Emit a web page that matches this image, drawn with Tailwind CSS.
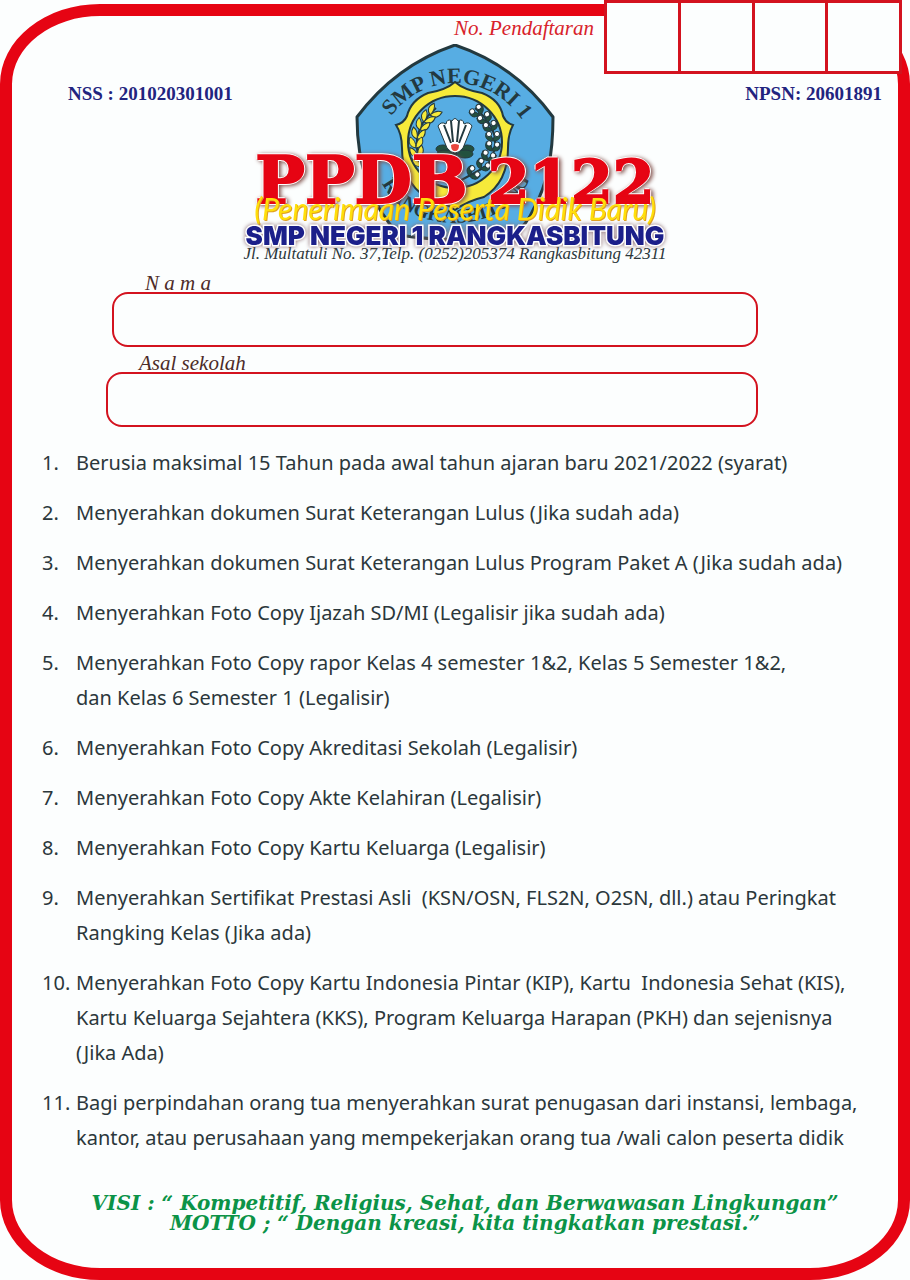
<!DOCTYPE html>
<html lang="id">
<head>
<meta charset="utf-8">
<title>Formulir PPDB SMP Negeri 1 Rangkasbitung</title>
<meta name="viewport" content="width=device-width, initial-scale=1">
<script src="https://cdn.jsdelivr.net/npm/@tailwindcss/browser@4"></script>
</head>
<body class="bg-[#fcfefe] font-['Noto_Sans','Open_Sans',sans-serif] text-[#2b373b]">
<main class="relative flex min-h-screen flex-col pt-1">
  <!-- Registration number boxes sit on top of the frame's corner -->
  <fieldset class="absolute top-0 right-2 z-10 flex h-[74px] w-[298px] divide-x-3 divide-[#d3131f] border-3 border-[#d3131f] bg-[#fcfefe]" aria-labelledby="no-label">
    <input class="w-0 flex-1 text-center text-3xl outline-none" type="text" maxlength="1" aria-label="Digit 1">
    <input class="w-0 flex-1 text-center text-3xl outline-none" type="text" maxlength="1" aria-label="Digit 2">
    <input class="w-0 flex-1 text-center text-3xl outline-none" type="text" maxlength="1" aria-label="Digit 3">
    <input class="w-0 flex-1 text-center text-3xl outline-none" type="text" maxlength="1" aria-label="Digit 4">
  </fieldset>

  <div class="flex flex-1 flex-col rounded-[100px/80px] border-12 border-[#e60413]">
    <p id="no-label" class="pr-[304px] text-right font-['Liberation_Serif',serif] text-[21px] leading-6 text-[#d8222a] italic">No. Pendaftaran</p>

    <header class="grid grid-cols-[1fr_424px_1fr] font-['Liberation_Serif',serif]">
      <p class="pt-[42px] pl-14 text-[19px] leading-6 font-bold text-[#22247f]">NSS : 201020301001</p>

      <div class="grid justify-items-center">
        <svg class="col-start-1 row-start-1 mt-1 h-[200px] w-[200px]" viewBox="355 44 200 200" role="img" aria-label="Lambang SMP Negeri 1 Rangkasbitung">
          <defs>
            <path id="arcTop" d="M387 122Q413 84 455 83Q500 84 526 126"/>
            <path id="arcBottom" d="M379 176Q396 221 455 223Q514 221 533 172"/>
            <g id="grain" fill="#f6ea3a" stroke="#23393f" stroke-width="1">
              <path d="M0 0C-6-1-8-5-6-11C-2-9 0-5 0 0Z"/>
              <path d="M0 0C6-1 8-5 6-11C2-9 0-5 0 0Z"/>
            </g>
            <g id="cotton" stroke="#23393f" stroke-width="1">
              <path d="M0 6C-7 6-8 2-7-2C-3-1-1 1 0 5C1 1 3-1 7-2C8 2 7 6 0 6Z" fill="#23513f"/>
              <circle cx="-4" cy="-1" r="2.6" fill="#fff"/>
              <circle cx="4" cy="-1" r="2.6" fill="#fff"/>
            </g>
          </defs>
          <path d="M455 45Q515 65 553 117Q553 175 534 208Q527 225 513 235Q455 244 399 235Q357 190 357 117Q396 65 455 45Z" fill="#57ade3" stroke="#23393f" stroke-width="3" stroke-linejoin="round"/>
          <path d="M455 82Q464 90 482 93Q500 100 503 116Q506 123 513 125Q508 134 508 148Q508 182 484 197Q467 201 455 210Q443 201 426 197Q402 182 402 148Q402 134 396 125Q404 123 407 116Q411 100 428 93Q446 90 455 82Z" fill="#f6ea3a" stroke="#23393f" stroke-width="2"/>
          <ellipse cx="455" cy="142" rx="47" ry="46" fill="#57ade3" stroke="#23393f" stroke-width="2"/>
          <!-- rice -->
          <g>
            <path d="M436 108Q404 135 425 173L450 183" fill="none" stroke="#23393f" stroke-width="2"/>
            <use href="#grain" transform="translate(430 115) rotate(48)"/>
            <use href="#grain" transform="translate(424 122) rotate(38)"/>
            <use href="#grain" transform="translate(420 130) rotate(25)"/>
            <use href="#grain" transform="translate(417 139) rotate(12)"/>
            <use href="#grain" transform="translate(416 148) rotate(0)"/>
            <use href="#grain" transform="translate(418 157) rotate(-12)"/>
            <use href="#grain" transform="translate(422 166) rotate(-24)"/>
          </g>
          <!-- cotton -->
          <g>
            <path d="M475 108Q508 135 487 166L456 183" fill="none" stroke="#23393f" stroke-width="2"/>
            <use href="#cotton" transform="translate(476 110) rotate(-35)"/>
            <use href="#cotton" transform="translate(484 117) rotate(-28)"/>
            <use href="#cotton" transform="translate(490 125) rotate(-15)"/>
            <use href="#cotton" transform="translate(493 135)"/>
            <use href="#cotton" transform="translate(493 145) rotate(8)"/>
            <use href="#cotton" transform="translate(489 155) rotate(20)"/>
            <use href="#cotton" transform="translate(484 164) rotate(35)"/>
            <use href="#cotton" transform="translate(474 172) rotate(50)"/>
          </g>
          <!-- flower -->
          <g stroke="#23393f" stroke-width="1">
            <path d="M455 152V182" stroke-width="4"/>
            <ellipse cx="443" cy="149" rx="7" ry="4" fill="#23513f"/>
            <ellipse cx="467" cy="149" rx="7" ry="4" fill="#23513f"/>
            <ellipse cx="445" cy="154" rx="8" ry="4" fill="#23513f"/>
            <ellipse cx="465" cy="154" rx="8" ry="4" fill="#23513f"/>
            <path d="M447 148L438 126Q441 121 446 124Q447 118 452 121Q455 116 458 121Q463 118 464 124Q469 121 472 126L463 148Q459 153 455 153Q451 153 447 148Z" fill="#fff"/>
            <path d="M444 125L451 143M451 121L453 142M459 121L457 142M466 125L459 143" fill="none" stroke-width="2"/>
            <path d="M451 145Q455 143 459 145Q459 151 455 151Q451 151 451 145Z" fill="#e8463c" stroke="none"/>
          </g>
          <g fill="#23393f" font-family="Liberation Serif, serif" font-weight="bold">
            <text font-size="22"><textPath href="#arcTop" startOffset="50%" text-anchor="middle">SMP NEGERI 1</textPath></text>
            <text font-size="20"><textPath href="#arcBottom" startOffset="50%" text-anchor="middle">RANGKASBITUNG</textPath></text>
          </g>
        </svg>

        <div class="z-10 col-start-1 row-start-1 flex flex-col items-center pt-[116px] whitespace-nowrap">
          <h1 class="flex items-baseline gap-5 font-['DejaVu_Serif',serif] text-[66px] leading-12 font-bold text-[#e60413] drop-shadow-[2px_1px_2px_#80504a] [-webkit-text-stroke:2px_#e60413] [text-shadow:1px_1px_0_#fff,-1px_1px_0_#fff,1px_-1px_0_#fff,-1px_-1px_0_#fff,2px_0_0_#fff,-2px_0_0_#fff,0_2px_0_#fff,0_-2px_0_#fff]">
            <span>PPDB</span><span class="text-[60px]">2122</span>
          </h1>
          <p class="-mt-2.5 font-['Lato',sans-serif] text-[30px] leading-6 text-[#ffdf0a] italic drop-shadow-[1px_1px_0_#e0a020]">(Penerimaan Peserta Didik Baru)</p>
          <p class="mt-1 font-['Inter',sans-serif] text-[26px] leading-6 font-black text-[#1b1f8a] drop-shadow-[0_0_2px_#8a6a70] [-webkit-text-stroke:3px_#fff] [paint-order:stroke]">SMP NEGERI 1 RANGKASBITUNG</p>
          <p class="-mt-0.5 text-[17px] leading-4 italic">Jl. Multatuli No. 37,Telp. (0252)205374 Rangkasbitung 42311</p>
        </div>
      </div>

      <p class="pt-[42px] pr-4 text-right text-[19px] leading-6 font-bold text-[#22247f]">NPSN: 20601891</p>
    </header>

    <form class="flex flex-col pt-3 pr-[140px] font-['Liberation_Serif',serif]">
      <label for="nama" class="pl-[133px] text-[21px] leading-[18px] text-[#4d2b28] italic">N a m a</label>
      <input id="nama" type="text" class="ml-[100px] h-[55px] rounded-2xl border-2 border-[#d3131f] px-5 text-xl outline-none">
      <label for="asal" class="mt-[7px] pl-[127px] text-[21px] leading-[18px] text-[#4d2b28] italic">Asal sekolah</label>
      <input id="asal" type="text" class="ml-[94px] h-[55px] rounded-2xl border-2 border-[#d3131f] px-5 text-xl outline-none">
    </form>

    <ol class="mt-[18px] flex flex-col gap-[15px] pl-[30px] text-[20px] leading-[35px]">
      <li class="flex"><span class="w-[34px] shrink-0">1.</span><p>Berusia maksimal 15 Tahun pada awal tahun ajaran baru 2021/2022 (syarat)</p></li>
      <li class="flex"><span class="w-[34px] shrink-0">2.</span><p>Menyerahkan dokumen Surat Keterangan Lulus (Jika sudah ada)</p></li>
      <li class="flex"><span class="w-[34px] shrink-0">3.</span><p>Menyerahkan dokumen Surat Keterangan Lulus Program Paket A (Jika sudah ada)</p></li>
      <li class="flex"><span class="w-[34px] shrink-0">4.</span><p>Menyerahkan Foto Copy Ijazah SD/MI (Legalisir jika sudah ada)</p></li>
      <li class="flex"><span class="w-[34px] shrink-0">5.</span><p>Menyerahkan Foto Copy rapor Kelas 4 semester 1&amp;2, Kelas 5 Semester 1&amp;2,<br>dan Kelas 6 Semester 1 (Legalisir)</p></li>
      <li class="flex"><span class="w-[34px] shrink-0">6.</span><p>Menyerahkan Foto Copy Akreditasi Sekolah (Legalisir)</p></li>
      <li class="flex"><span class="w-[34px] shrink-0">7.</span><p>Menyerahkan Foto Copy Akte Kelahiran (Legalisir)</p></li>
      <li class="flex"><span class="w-[34px] shrink-0">8.</span><p>Menyerahkan Foto Copy Kartu Keluarga (Legalisir)</p></li>
      <li class="flex"><span class="w-[34px] shrink-0">9.</span><p>Menyerahkan Sertifikat Prestasi Asli&nbsp; (KSN/OSN, FLS2N, O2SN, dll.) atau Peringkat<br>Rangking Kelas (Jika ada)</p></li>
      <li class="flex"><span class="w-[34px] shrink-0">10.</span><p>Menyerahkan Foto Copy Kartu Indonesia Pintar (KIP), Kartu&nbsp; Indonesia Sehat (KIS),<br>Kartu Keluarga Sejahtera (KKS), Program Keluarga Harapan (PKH) dan sejenisnya<br>(Jika Ada)</p></li>
      <li class="flex"><span class="w-[34px] shrink-0">11.</span><p>Bagi perpindahan orang tua menyerahkan surat penugasan dari instansi, lembaga,<br>kantor, atau perusahaan yang mempekerjakan orang tua /wali calon peserta didik</p></li>
    </ol>

    <footer class="mt-[38px] pl-5 text-center font-['DejaVu_Serif',serif] text-[20px] leading-5 font-bold text-[#0b9347] italic">
      <p>VISI : “ Kompetitif, Religius, Sehat, dan Berwawasan Lingkungan”</p>
      <p>MOTTO ; “ Dengan kreasi, kita tingkatkan prestasi.”</p>
    </footer>
  </div>
</main>
</body>
</html>
